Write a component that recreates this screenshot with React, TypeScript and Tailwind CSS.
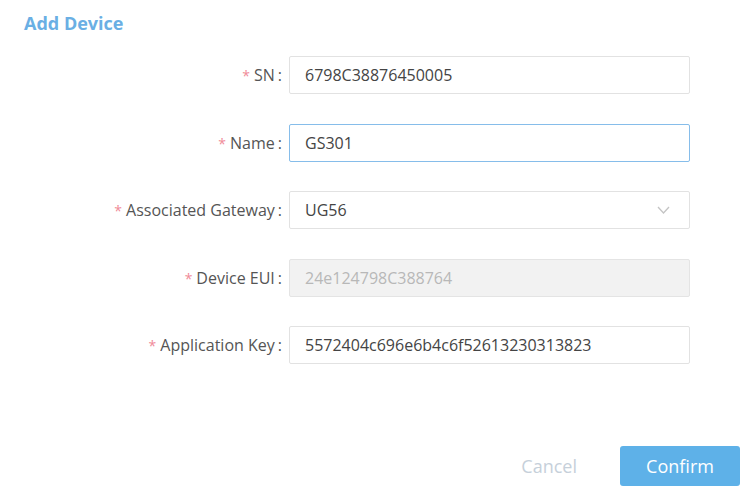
import React from 'react';

const FIELDS = [
  { label: 'SN', value: '6798C38876450005' },
  { label: 'Name', value: 'GS301', focused: true },
  { label: 'Associated Gateway', value: 'UG56', select: true },
  { label: 'Device EUI', value: '24e124798C388764', disabled: true },
  { label: 'Application Key', value: '5572404c696e6b4c6f52613230313823' },
];

type Field = (typeof FIELDS)[number] & { focused?: boolean; select?: boolean; disabled?: boolean };

const Row = ({ f }: { f: Field }) => (
  <div className="flex items-center h-[38px]">
    <label className="w-[283px] pr-[1px] text-right text-[16px] text-[#555]">
      <span className="text-[#f08a98] mr-[4px] text-[14px]">*</span>
      {f.label}
      <span className="ml-[3px]">:</span>
    </label>
    <div
      className={`ml-[6px] w-[401px] h-[38px] flex items-center px-[15px] rounded-[2px] border text-[16px] ${
        f.focused
          ? 'border-[#86bdea]'
          : f.disabled
          ? 'border-[#e4e4e4] bg-[#f2f2f2] text-[#b8b8b8]'
          : 'border-[#e2e2e2]'
      } ${f.disabled ? '' : 'text-[#444]'}`}
    >
      <span className="flex-1">{f.value}</span>
      {f.select && (
        <svg width="13" height="8" viewBox="0 0 13 8" fill="none" className="mr-[4px]">
          <path d="M1 1l5.5 6L12 1" stroke="#c4c4c4" strokeWidth="1.3" />
        </svg>
      )}
    </div>
  </div>
);

export default function App() {
  return (
    <div className="w-[749px] h-[499px] bg-white relative" style={{ fontFamily: '"Open Sans", "Noto Sans", sans-serif' }}>
      <div className="pl-[24px] pt-[10px]">
        <h1 className="text-[18px] font-bold text-[#6aafe4]">Add Device</h1>
      </div>
      <div className="mt-[19px] flex flex-col gap-[29.5px]">
        {FIELDS.map((f) => (
          <Row key={f.label} f={f as Field} />
        ))}
      </div>
      <div className="mt-[82px] flex justify-end items-center pr-[9px]">
        <button className="text-[18px] text-[#c6d0da] mr-[43px]">Cancel</button>
        <button className="w-[120px] h-[40px] rounded-[3px] bg-[#5eb1e8] text-white text-[18px]">Confirm</button>
      </div>
    </div>
  );
}
